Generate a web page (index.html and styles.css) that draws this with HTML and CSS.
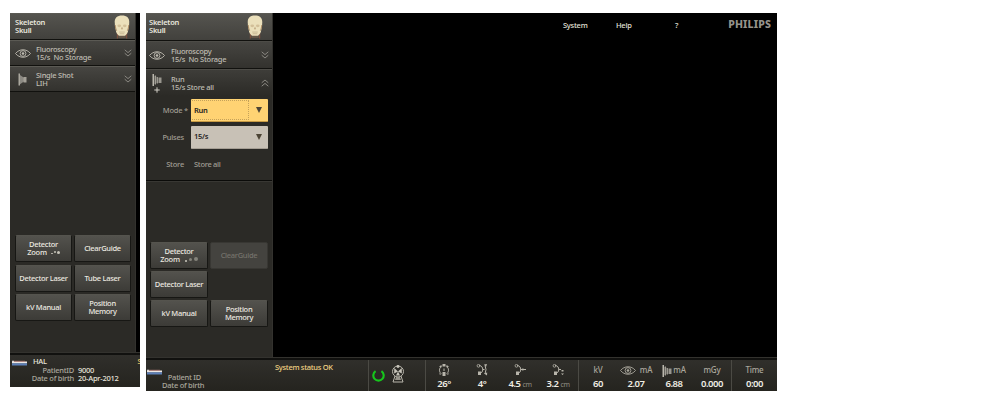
FILE: index.html
```
<!DOCTYPE html>
<html lang="en">
<head>
<meta charset="utf-8">
<title>Fluoroscopy console</title>
<link rel="stylesheet" href="styles.css">
</head>
<body>
<svg class="defs" width="0" height="0">
  <symbol id="skull" viewBox="0 0 18 26">
    <path d="M4 15v10.500M14 15v10.500" stroke="#7c5140" stroke-width="1.300"/>
    <path d="M5 17h8v8H5z" fill="#655748"/>
    <path d="M1.200 9C.5 3 4 .5 9 .5S17.500 3 16.800 9c0 3-.5 5-1 7-.3 3-1.500 5-3.500 6.500H5.700C3.700 21 2.500 19 2.200 16 1.700 14 1.200 12 1.200 9z" fill="#ebe0bb"/>
    <path d="M1.800 11c0 3 .7 4 1.400 6M16.200 11c0 3-.7 4-1.400 6" stroke="#a8865c" fill="none"/>
    <ellipse cx="6" cy="11.700" rx="2" ry="1.500" fill="#d2bf98"/><ellipse cx="12" cy="11.700" rx="2" ry="1.500" fill="#d2bf98"/>
    <path d="M9 12.500l-1 3h2z" fill="#b59b75"/>
    <path d="M6 18.500h6M6.500 20.300h5" stroke="#b8a582" stroke-width=".7"/>
  </symbol>
  <symbol id="eye" viewBox="0 0 16 11">
    <g fill="none" stroke="currentColor" stroke-width=".9"><path d="M.5 5.500C4.500.5 11.500.5 15.500 5.500 11.500 10.500 4.500 10.500.5 5.500z"/><circle cx="8" cy="5.500" r="2.900"/></g>
    <circle cx="8" cy="5.500" r="1.300" fill="currentColor"/>
  </symbol>
  <symbol id="shot" viewBox="0 0 10 13">
    <path d="M.5.500h1.500v12H.5z" fill="#aaa79e"/><path d="M2 2l4 2.800v3.700L2 11.200z" fill="#8b8982"/><path d="M5.500 4h3v5.500h-3z" fill="#a4a198"/>
  </symbol>
  <symbol id="run" viewBox="0 0 10 12">
    <path d="M.5 0h1.500v12H.5z" fill="#bbb8ae"/><path d="M2 1.500l4 2v5l-4 2z" fill="#65635d"/><path d="M3 1.500h1v9H3zM4.900 3h1v6.500h-1z" fill="#a19e95"/><path d="M6.500 3.500h3v5.500h-3z" fill="#99968e"/>
  </symbol>
  <symbol id="down" viewBox="0 0 8 8"><path d="M.7.8L4 3.600 7.300.8M.7 4.200L4 7l3.300-2.800" fill="none" stroke="currentColor"/></symbol>
  <symbol id="up" viewBox="0 0 8 8"><path d="M.7 3.800L4 1l3.300 2.800M.7 7.200L4 4.400l3.300 2.800" fill="none" stroke="currentColor"/></symbol>
  <symbol id="bed" viewBox="0 0 15 6">
    <path d="M0 1.500h15v2H0z" fill="#eee8e4"/><path d="M2 .8h11v1H2z" fill="#b3807a"/><path d="M0 .8h2v1H0z" fill="#f4f0ed"/><path d="M0 3.300h15v2.200H0z" fill="#5d80b8"/>
  </symbol>
</svg>

<main class="stage">
  <section class="console console-a">
    <div class="upper">
      <aside class="side">
        <header class="head"><p>Skeleton<br>Skull</p><svg class="skull"><use href="#skull"/></svg></header>
        <div class="row"><svg class="eye"><use href="#eye"/></svg><p>Fluoroscopy<br>15/s&nbsp; No Storage</p><svg class="chev"><use href="#down"/></svg></div>
        <div class="row"><span class="iconbox"><svg class="shot"><use href="#shot"/></svg></span><p>Single Shot<br>LIH</p><svg class="chev"><use href="#down"/></svg></div>
        <div class="keys">
          <button>Detector<br><span class="zoom">Zoom <i></i><i></i><i></i></span></button>
          <button>ClearGuide</button>
          <button>Detector Laser</button>
          <button>Tube Laser</button>
          <button>kV Manual</button>
          <button>Position<br>Memory</button>
        </div>
      </aside>
    </div>
    <footer class="foot">
      <svg class="bed"><use href="#bed"/></svg>
      <div class="patient">
        <b class="name">HAL</b>
        <span>PatientID</span><b>9000</b>
        <span>Date of birth</span><b>20-Apr-2012</b>
      </div>
      <span class="clip">S</span>
    </footer>
  </section>

  <section class="console console-b">
    <div class="upper">
      <aside class="side">
        <header class="head"><p>Skeleton<br>Skull</p><svg class="skull"><use href="#skull"/></svg></header>
        <div class="row"><svg class="eye"><use href="#eye"/></svg><p>Fluoroscopy<br>15/s&nbsp; No Storage</p><svg class="chev"><use href="#down"/></svg></div>
        <div class="row open"><span class="iconbox stack"><svg class="run"><use href="#run"/></svg><svg class="plus" viewBox="0 0 6 6"><path d="M3 .3v5.400M.3 3h5.400" stroke="#d3d0c7"/></svg></span><p>Run<br>15/s&nbsp;Store all</p><svg class="chev"><use href="#up"/></svg></div>
        <div class="form">
          <label>Mode *</label><div class="select active"><span>Run</span><svg viewBox="0 0 6 6"><path d="M0 0h6L3 6z"/></svg></div>
          <label class="in">Pulses</label><div class="select"><span>15/s</span><svg viewBox="0 0 6 6"><path d="M0 0h6L3 6z"/></svg></div>
          <label class="in">Store</label><div class="value">Store all</div>
        </div>
        <div class="keys">
          <button>Detector<br><span class="zoom big">Zoom <i></i><i></i><i></i></span></button>
          <button class="off">ClearGuide</button>
          <button>Detector Laser</button>
          <span></span>
          <button>kV Manual</button>
          <button>Position<br>Memory</button>
        </div>
      </aside>
      <nav class="menu"><span class="system">System</span><span class="help">Help</span><span class="ask">?</span><strong>PHILIPS</strong></nav>
    </div>
    <footer class="foot">
      <svg class="bed"><use href="#bed"/></svg>
      <div class="ids">Patient ID<br>Date of birth</div>
      <div class="status">System status OK</div>
      <div class="xray">
        <svg class="ready" viewBox="0 0 12 12"><path d="M3.300 2a4.800 4.800 0 1 0 5.400 0" fill="none" stroke="#16c61c" stroke-width="2"/></svg>
        <svg class="rad" viewBox="0 0 14 18"><g fill="none" stroke="#b8b5ab"><circle cx="7" cy="6.500" r="5.500"/><path d="M4 11l-2 6h10l-2-6"/></g><path d="M7 6.500L3.200 3v5.500zM7 6.500L10.800 3v5.500zM7 6.500l2 4H5z" fill="#c7c4ba"/><path d="M5 12h4l1 3H4z" fill="#96938a"/><circle cx="7" cy="1.500" r="1.400" fill="#c7c4ba"/></svg>
      </div>
      <div class="geometry">
        <div class="m"><svg class="arm" viewBox="0 0 12 12"><g fill="none" stroke="currentColor" stroke-width=".9"><path d="M3.300 2.500A4.500 4.500 0 0 0 3.300 9.800"/><path d="M8.700 2.500A4.500 4.500 0 0 1 8.700 9.800"/></g><path d="M4.500 0h3v2.500h-3zM4.500 8h3v4h-3zM1 2.500l2.500-1.500v2.500zM11 2.500L8.500 1v2.500zM1.500 9l2 1.500h-2zM10.500 9l-2 1.500h2zM5.500 4.500h1v2.500h-1z" fill="currentColor"/></svg><b>26°</b></div>
        <div class="m"><svg class="arm" viewBox="0 0 12 12"><path d="M3 1.500c5 0 5 8 0 8M6.500 5.500H8.500M9 1.500q2 4 0 8.500" fill="none" stroke="currentColor"/><circle cx="2.500" cy="1.800" r="1.400" fill="none" stroke="currentColor" stroke-width=".8"/><path d="M2 7.500h3V11H2zM8 .5l3-.5-1 3zM8 9.500l3 2 .2-3z" fill="currentColor"/></svg><b>4°</b></div>
        <div class="m"><svg class="arm" viewBox="0 0 12 12"><path d="M3 1.500c5 0 5 8 0 8M6.500 5.500H12" fill="none" stroke="currentColor"/><circle cx="2.500" cy="1.800" r="1.400" fill="none" stroke="currentColor" stroke-width=".8"/><path d="M2 7.500h3V11H2zM8.500 4l2 1.500-2 1.500z" fill="currentColor"/></svg><b>4.5 <small>cm</small></b></div>
        <div class="m"><svg class="arm" viewBox="0 0 12 12"><path d="M3 1.500c5 0 5 8 0 8M6.500 5.500H9" fill="none" stroke="currentColor"/><circle cx="2.500" cy="1.800" r="1.400" fill="none" stroke="currentColor" stroke-width=".8"/><path d="M2 7.500h3V11H2zM9.500 6h2v1.500h-2zM9 9.500l1.500 1.500L12 9.500z" fill="currentColor"/></svg><b>3.2 <small>cm</small></b></div>
      </div>
      <div class="dose">
        <div class="m"><span>kV</span><b>60</b></div>
        <div class="m"><span><svg class="eye"><use href="#eye"/></svg>mA</span><b>2.07</b></div>
        <div class="m"><span class="tight"><svg class="run"><use href="#run"/></svg>mA</span><b>6.88</b></div>
        <div class="m"><span>mGy</span><b>0.000</b></div>
      </div>
      <div class="time"><div class="m"><span>Time</span><b>0:00</b></div></div>
    </footer>
  </section>
</main>
</body>
</html>
```
FILE: styles.css
```
* { box-sizing: border-box; }
body { margin: 0; background: #fff; font: 500 7.500px/8.500px "Noto Sans", "Open Sans", sans-serif; letter-spacing: -.3px; color: #bfbcb2; }
p { margin: 0; }
svg { display: block; flex: none; }
.defs { position: absolute; }
.stage { display: flex; align-items: flex-start; gap: 6px; width: 1000px; height: 400px; padding: 13px 0 0 10px; overflow: hidden; white-space: nowrap; }
.console { display: flex; flex-direction: column; background: #000; overflow: hidden; }
.console-a { width: 130px; height: 374px; }
.console-b { width: 631px; height: 378px; }
.upper { flex: 1; display: flex; min-height: 0; }
.side { display: flex; flex-direction: column; width: 126px; background: #2b2a26; border-right: 1px solid #33322e; }
.console-b .side { width: 127px; }
.head, .row { display: flex; align-items: center; border-bottom: 1px solid #11110e; border-top: 1px solid #5b5a54; }
.head { height: 27px; padding: 0 4px 1px 5px; justify-content: space-between; background: linear-gradient(#55544f, #42413d); color: #e9e7df; font-weight: 600; letter-spacing: -.22px; }
.console-b .head { height: 28px; padding: 0 8px 2px 3px; }
.skull { width: 18px; height: 24px; margin-top: 1px; }
.row { height: 26px; background: linear-gradient(#464541, #33322e); }
.row p { width: 88px; margin-left: 5px; line-height: 8.300px; letter-spacing: -.25px; }
.row .eye, .row .iconbox { margin-left: 5px; }
.eye { width: 16px; height: 11px; }
.iconbox { width: 16px; padding-left: 3px; }
.shot { width: 10px; height: 13px; }
.chev { width: 8px; height: 8px; color: #898780; }
.console-b .row { height: 28px; border-top-color: #4d4c47; }
.console-b .row p { width: 90px; margin-left: 6px; }
.console-b .row .eye, .console-b .row .iconbox { margin-left: 3px; }
.console-b .row.open { height: 27px; border-bottom: 0; background: linear-gradient(#3e3d39, #2b2a26); }
.stack { display: flex; flex-direction: column; gap: 1px; }
.run { width: 10px; height: 12px; }
.plus { width: 6px; height: 6px; margin-left: 2px; }

.form { height: 85px; display: grid; grid-template: 23px 23px 17px / 43px 77px; column-gap: 3px; row-gap: 4px; margin-left: -1px; padding-top: 3px; padding-left: 0; align-items: center; border-bottom: 1px solid #0b0b09; box-shadow: 0 1px #383733; color: #a09d93; }
.form label { text-align: right; letter-spacing: -.22px; }
.form .in { padding-right: 4px; }
.form > :nth-child(n+5) { margin-top: 5px; }
.select { height: 23px; display: flex; align-items: center; justify-content: space-between; padding: 0 6px 0 1px; border-radius: 1px; background: #c8c1b6; color: #24221e; font-weight: 600; border-bottom: 1px solid #a69f94; }
.select span { width: 57px; height: 20px; padding-left: 2px; line-height: 19px; }
.select.active { background: #ffd373; border-color: #c79a43; }
.select.active span { border: 1px dotted #c5a25a; border-left: 0; line-height: 18px; }
.select svg { width: 6px; height: 6px; fill: #4c4435; }
.value { padding-left: 3px; }

.keys { display: grid; grid-template: 27px 27px 27px / 57px 57px; gap: 2.500px 2px; margin: auto 0 32px 5px; }
.console-b .keys { grid-template-columns: 58px 58px; margin: auto 0 31px 4px; gap: 2px; }
button { padding: 0 0 1px; border: 1px solid #171714; border-top-color: #55544e; border-radius: 2px; background: linear-gradient(#53524d, #3c3b37); color: #ece9e0; font: inherit; line-height: 8px; letter-spacing: inherit; text-align: center; }
.off { background: #44433f; color: #74726b; border-color: #383733; }
.zoom { display: inline-flex; align-items: center; gap: 1px; }
.zoom i { width: 2px; height: 2px; border-radius: 50%; background: #c6c3b9; }
.zoom i:first-of-type { margin-left: 3px; align-self: flex-end; margin-bottom: 2px; height: 1.500px; }
.zoom i:last-child { width: 3px; height: 3px; }
.zoom.big { line-height: 9px; gap: 2px; }
.zoom.big i + i { width: 3px; height: 3px; background: #85837b; }
.zoom.big i:last-child { width: 4px; height: 4px; }

.menu { flex: 1; display: flex; height: 24px; padding: 0 6px 0 290px; align-items: center; color: #e2e0d9; letter-spacing: -.25px; }
.system { width: 53px; }
.help { width: 59px; }
.menu strong { margin: -2px 0 0 auto; color: #96938b; font: 800 10.500px/10px "Noto Sans", sans-serif; letter-spacing: .15px; }

.foot { position: relative; display: flex; height: 33px; border-top: 2px solid #11110f; background: linear-gradient(#302f2b, #25241f); color: #aaa79d; box-shadow: 0 -1px #33322e; }
.console-a .foot { height: 34px; }
.bed { width: 15px; height: 6px; margin: 5px 0 0 2px; }
.patient { display: grid; grid-template-columns: 49px auto; gap: 0 4px; margin: 1.500px 0 0 -2px; height: 28px; line-height: 8px; text-align: right; grid-template-rows: 9.500px 8px 8px; letter-spacing: -.25px; }
.patient b { text-align: left; color: #e8e5dc; font-weight: 500; }
.patient .name { grid-column: 1 / 3; padding-left: 8px; }
.clip { position: absolute; left: 127.500px; top: 2px; color: #e8c767; }
.console-b .bed { margin: 9px 0 0 1px; }
.ids { width: 39px; margin: 12.500px 0 0; text-align: right; line-height: 8px; letter-spacing: -.25px; }
.status { width: 93px; margin: 2.500px 0 0 74px; color: #f0d183; letter-spacing: -.3px; }
.xray, .geometry, .dose, .time { display: flex; border-left: 1px solid #4b4a44; }
.xray { width: 57px; padding: 4px 0 0 3px; gap: 7px; }
.ready { width: 13px; height: 13px; margin-top: 5px; }
.rad { width: 14px; height: 18px; margin: 1px 0 0 -1px; }
.geometry { width: 153px; }
.dose { width: 153px; }
.time { width: 46px; }
.m { display: flex; flex-direction: column; align-items: center; width: 39px; padding: 4px 0 1px; }
.geometry .m { width: 38.500px; padding-right: 2px; }
.time .m { width: 46px; }
.arm { width: 12px; height: 12px; color: #b8b5ab; }
.m span { display: flex; align-items: center; justify-content: center; gap: 4px; height: 13px; font-size: 8px; letter-spacing: -.2px; }
.m .tight { gap: 1px; }
.m b { margin-top: auto; color: #f0ede4; font: 600 9.500px/12px "Noto Sans", sans-serif; letter-spacing: -.5px; }
.m small { font: 400 7px/8px "Noto Sans", sans-serif; color: #8f8d84; }
```
